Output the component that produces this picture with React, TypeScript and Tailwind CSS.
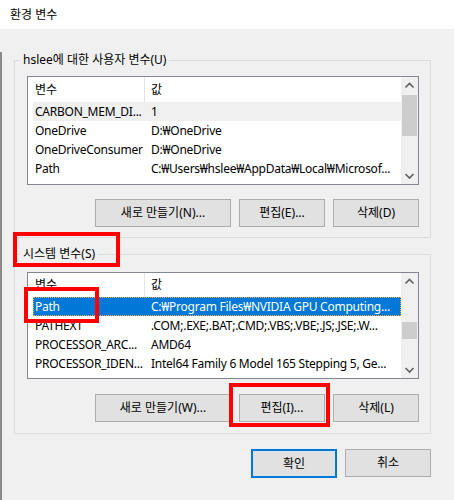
const font = { fontFamily: "'Noto Sans', 'Noto Sans CJK KR', sans-serif" };

type Row = { name: string; value: string };

const userVars: Row[] = [
  { name: "CARBON_MEM_DI...", value: "1" },
  { name: "OneDrive", value: "D:₩OneDrive" },
  { name: "OneDriveConsumer", value: "D:₩OneDrive" },
  { name: "Path", value: "C:₩Users₩hslee₩AppData₩Local₩Microsof..." },
];

const systemVars: Row[] = [
  { name: "Path", value: "C:₩Program Files₩NVIDIA GPU Computing..." },
  { name: "PATHEXT", value: ".COM;.EXE;.BAT;.CMD;.VBS;.VBE;.JS;.JSE;.W..." },
  { name: "PROCESSOR_ARC...", value: "AMD64" },
  { name: "PROCESSOR_IDEN...", value: "Intel64 Family 6 Model 165 Stepping 5, Ge..." },
];

function Chevron({ down }: { down?: boolean }) {
  return (
    <svg width="17" height="17" viewBox="0 0 17 17">
      <path
        d={down ? "M4.5 7 L8.5 11 L12.5 7" : "M4.5 10.5 L8.5 6.5 L12.5 10.5"}
        fill="none"
        stroke="#606060"
        strokeWidth="1.6"
      />
    </svg>
  );
}

function ScrollBar({ thumbTop, thumbHeight }: { thumbTop: string; thumbHeight: string }) {
  return (
    <div className="w-[17px] flex flex-col bg-[#f0f0f0]">
      <Chevron />
      <div className="flex-1">
        <div className={`${thumbTop} ${thumbHeight} mx-[1px] bg-[#cdcdcd]`} />
      </div>
      <Chevron down />
    </div>
  );
}

function ListView({
  rows,
  height,
  headerHeight,
  selected,
  thumbTop,
  thumbHeight,
}: {
  rows: Row[];
  height: string;
  headerHeight: string;
  selected: "focus" | "inactive";
  thumbTop: string;
  thumbHeight: string;
}) {
  return (
    <div className={`ml-[12px] w-[392px] ${height} border border-[#828790] bg-white flex`}>
      <div className="flex-1 overflow-hidden">
        <div className={`${headerHeight} pl-[5px] flex items-center`}>
          <div className="w-[112px] h-full pl-[2px] flex items-center border-r border-[#e5e5e5]">변수</div>
          <div className="pl-[6px]">값</div>
        </div>
        <div className="pl-[5px] tracking-[-0.25px]">
          {rows.map((r, i) => {
            const sel = i === 0;
            let cls = "";
            if (sel && selected === "focus")
              cls = "bg-[#0078d7] text-white outline-1 outline-dotted outline-[#f0a848] -outline-offset-1";
            if (sel && selected === "inactive") cls = "bg-[#f0f0f0]";
            return (
              <div key={r.name} className={`h-[19px] leading-[19px] flex whitespace-nowrap ${cls}`}>
                <div className="w-[112px] pl-[2px] overflow-hidden">{r.name}</div>
                <div className="pl-[6px] overflow-hidden">{r.value}</div>
              </div>
            );
          })}
        </div>
      </div>
      <ScrollBar thumbTop={thumbTop} thumbHeight={thumbHeight} />
    </div>
  );
}

function Button({ label, width, primary }: { label: string; width: string; primary?: boolean }) {
  return (
    <div
      className={`${width} flex items-center justify-center bg-[#e1e1e1] ${
        primary ? "h-[29px] border-2 border-[#0078d7]" : "h-[28px] border border-[#adadad]"
      }`}
    >
      {label}
    </div>
  );
}

export default function App() {
  return (
    <div className="relative w-[454px] h-[500px] overflow-hidden bg-[#f0f0f0] text-[12px] text-black" style={font}>
      {/* Title bar */}
      <div className="h-[29px] bg-white pl-[10px] flex items-center">환경 변수</div>

      <div className="h-[471px] border-l-2 border-[#8a8a8a]">
        {/* User variables */}
        <fieldset className="ml-[12px] mt-[23px] w-[417px] border border-[#dcdcdc] pb-[10px]">
          <legend className="ml-[5px] px-[3px] leading-[16px]">hslee에 대한 사용자 변수(U)</legend>
          <div className="mt-[8px]">
            <ListView
              rows={userVars}
              height="h-[109px]"
              headerHeight="h-[25px]"
              selected="inactive"
              thumbTop="mt-[1px]"
              thumbHeight="h-[41px]"
            />
          </div>
          <div className="mt-[14px] pr-[11px] flex justify-end gap-2">
            <Button label="새로 만들기(N)..." width="w-[136px]" />
            <Button label="편집(E)..." width="w-[86px]" />
            <Button label="삭제(D)" width="w-[86px]" />
          </div>
        </fieldset>

        {/* System variables */}
        <fieldset className="ml-[12px] mt-[8px] w-[417px] border border-[#dcdcdc] pb-[11px]">
          <legend className="ml-[5px] px-[3px] leading-[16px]">시스템 변수(S)</legend>
          <div className="mt-[10px]">
            <ListView
              rows={systemVars}
              height="h-[107px]"
              headerHeight="h-[24px]"
              selected="focus"
              thumbTop="mt-[32px]"
              thumbHeight="h-[17px]"
            />
          </div>
          <div className="mt-[15px] pr-[11px] flex justify-end gap-2">
            <Button label="새로 만들기(W)..." width="w-[136px]" />
            <Button label="편집(I)..." width="w-[86px]" />
            <Button label="삭제(L)" width="w-[86px]" />
          </div>
        </fieldset>

        {/* OK / Cancel */}
        <div className="mt-[15px] w-[429px] flex justify-end gap-2">
          <Button label="확인" width="w-[86px]" primary />
          <Button label="취소" width="w-[86px]" />
        </div>
      </div>

      {/* Red annotation boxes */}
      <div className="absolute left-[13px] top-[232px] w-[107px] h-[35px] border-4 border-[#ff0000]" />
      <div className="absolute left-[24px] top-[287px] w-[75px] h-[36px] border-4 border-[#ff0000]" />
      <div className="absolute left-[229px] top-[383px] w-[101px] h-[44px] border-4 border-[#ff0000]" />
    </div>
  );
}
